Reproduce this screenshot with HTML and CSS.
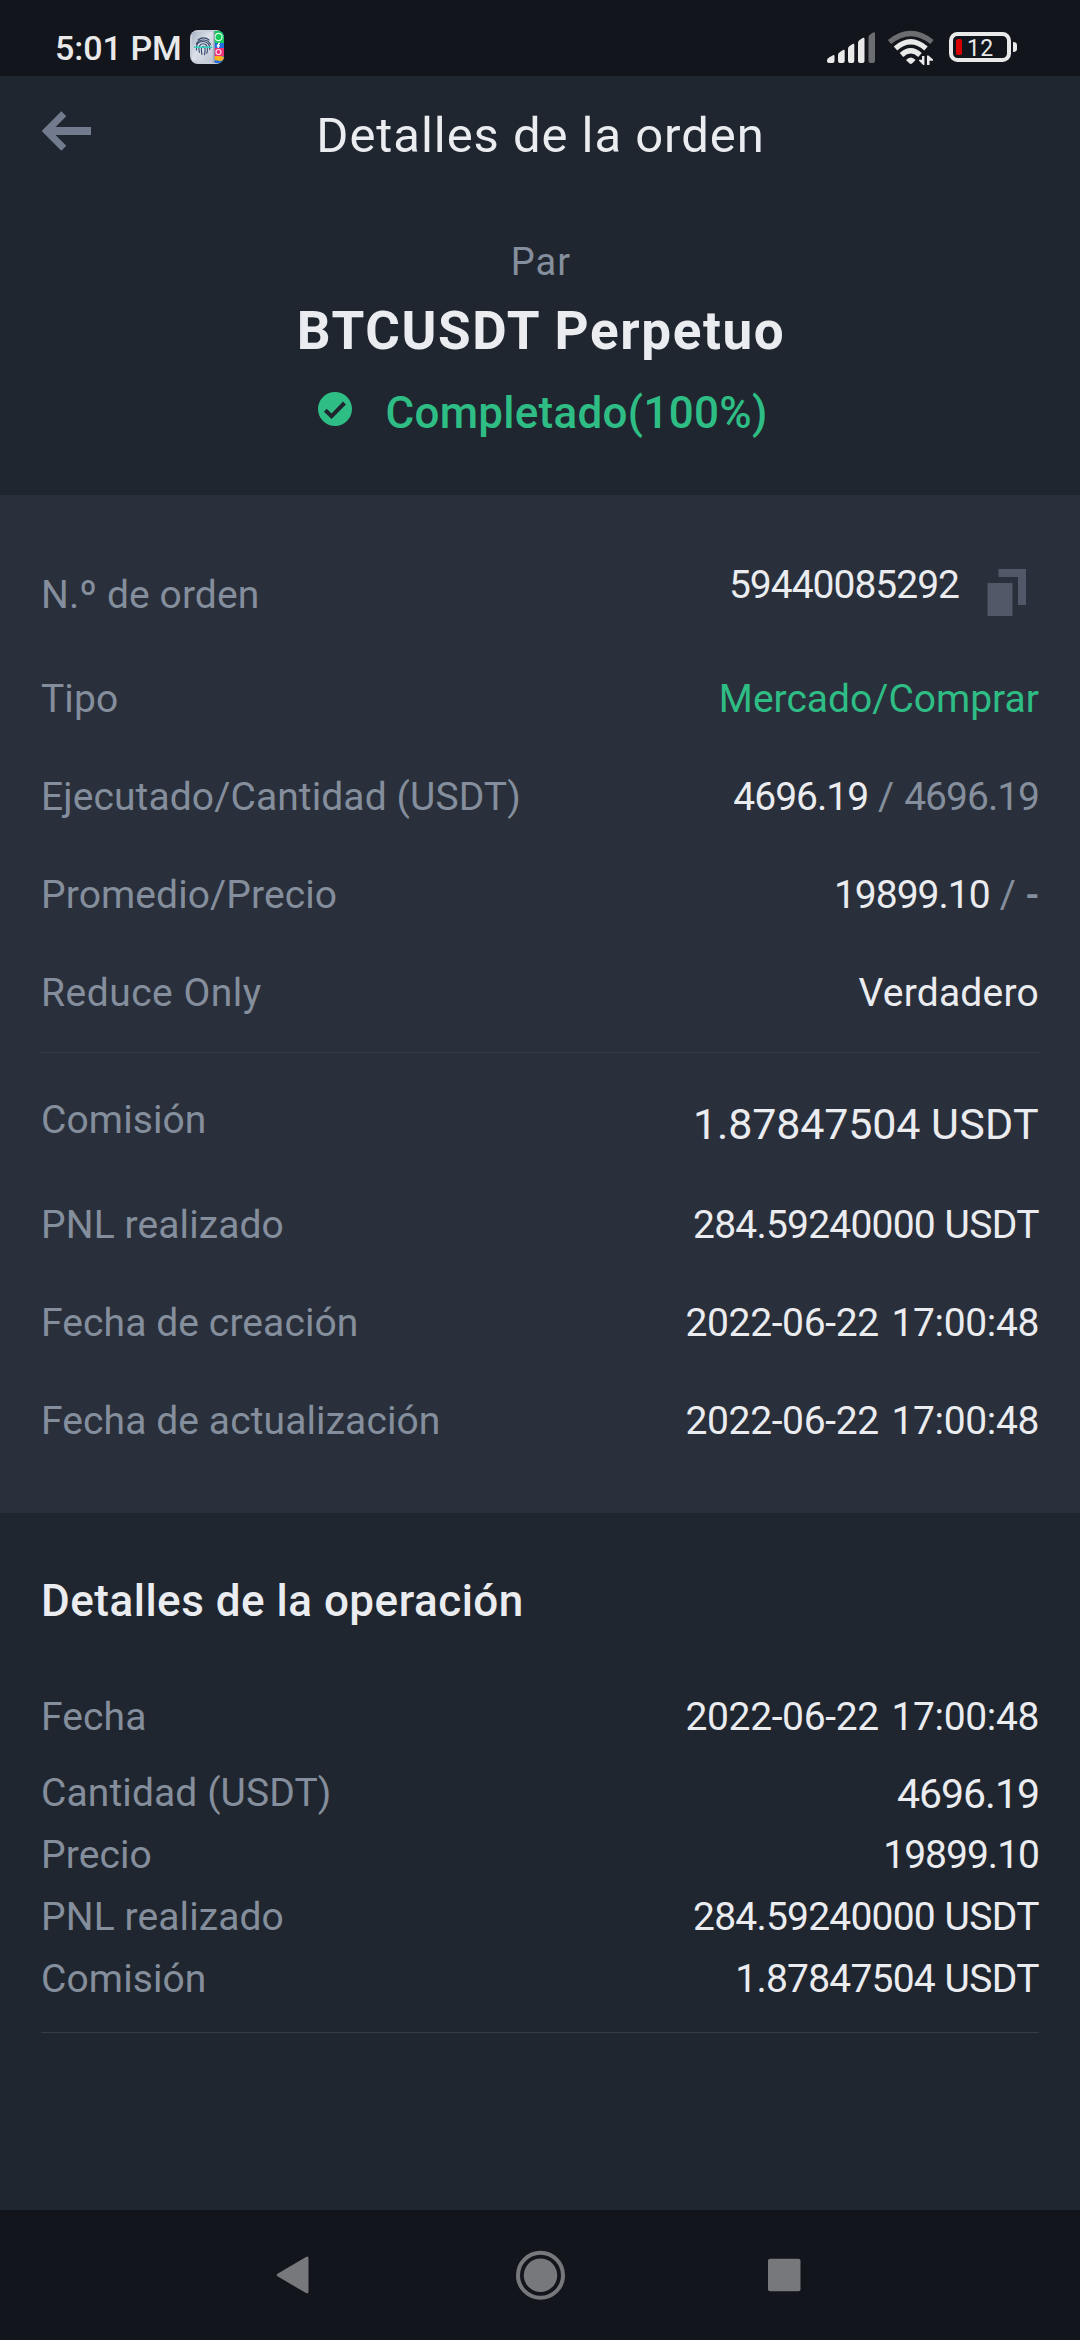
FILE: index.html
```html
<!DOCTYPE html>
<html lang="es">
<head>
<meta charset="utf-8">
<meta name="viewport" content="width=device-width">
<title>Detalles de la orden</title>
<link rel="stylesheet" href="styles.css">
</head>
<body>
<div class="screen">
  <div class="statusbar">
    <div class="status-left">
      <span class="clock">5:01 PM</span>
      <svg class="app-icon" viewBox="0 0 34 34" width="34" height="34">
        <defs>
          <linearGradient id="door" x1="0" y1="0" x2="1" y2="1"><stop offset="0" stop-color="#aab4c6"/><stop offset=".45" stop-color="#dce1e9"/><stop offset="1" stop-color="#b9c0ce"/></linearGradient>
          <clipPath id="round"><rect width="34" height="34" rx="8"/></clipPath>
        </defs>
        <g clip-path="url(#round)">
          <rect width="34" height="34" fill="#c9cfda"/>
          <path d="M2 2h22v31L2 30z" fill="url(#door)"/>
          <rect x="24.500" y="1" width="9.500" height="32" fill="#1f6fe0"/>
          <rect x="24.500" y="1" width="9.500" height="12" fill="#15c95a"/>
          <circle cx="28.500" cy="7" r="3.600" fill="none" stroke="#d8ffe6" stroke-width="1.200"/>
          <path d="M30 13.300c-1.500 0-1.800.6-1.800 1.700v3M26.800 15.700h3" fill="none" stroke="#fff" stroke-width="1.400"/>
          <rect x="24.500" y="18" width="9.500" height="8" fill="#ef2f78"/>
          <circle cx="28.500" cy="22" r="2.500" fill="none" stroke="#ffd5e4" stroke-width="1.200"/>
          <path d="M24.500 26H31l3 1v3l-4 1-5.500-1z" fill="#ffb01c"/>
          <path d="M24 2v31" stroke="#8e97a6" stroke-width="1"/>
          <g fill="none" stroke="#34466a" stroke-width="1.100" stroke-linecap="round">
            <path d="M8 10c3-2.800 8-2.800 11 0M6.300 14c2-5 11.500-6 14.200.5M6.500 20c-.8-6 2-8.500 6.300-8.500s7.500 3 7 8M9.300 22.500c-1-5.500.3-8.700 3.700-8.700s4.900 2.600 4.400 6.500c-.2 2-.6 3-.6 3M12 24.500c-1-4-1-8 1.200-8 2.600 0 2 4.500 1.300 8.300"/>
          </g>
          <path d="M4 17.300h18" stroke="#2fd3bd" stroke-width="1.500"/>
        </g>
      </svg>
    </div>
    <svg class="status-icons" viewBox="824 28 196 40" width="196" height="40">
      <g fill="#e9e9ea">
        <path d="M827 60.500q0-2 2-3l4-2.300q1.500-.7 1.500 1V61q0 2-2 2H829q-2 0-2-2z"/>
        <path d="M838 55q0-2 2-3l3-2q1.700-.8 1.700 1V61q0 2-2 2H840q-2 0-2-2z"/>
        <path d="M848 49q0-2 1.600-3l3-2q1.700-.8 1.700 1V61q0 2-2 2H850q-2 0-2-2z"/>
        <path d="M858 43q0-2 1.600-3l3-2q1.900-.8 1.900 1V61q0 2-2 2H860q-2 0-2-2z"/>
      </g>
      <path d="M868.500 37.500q0-2 1.600-3l3-2q1.900-.8 1.900 1V61q0 2-2 2h-2.500q-2 0-2-2z" fill="#6c6d71"/>
      <g fill="none" stroke-width="5.200">
        <path d="M889.500 42q21.200-17 42.500 0" stroke="#6c6d71"/>
        <path d="M895.500 48.500q15.200-13.500 30.500 0" stroke="#e9e9ea"/>
        <path d="M901.500 55q9.200-8.500 18.500 0" stroke="#e9e9ea"/>
      </g>
      <path d="M906 60q4.800-5 9.600 0l-3.600 3.600q-1.200.8-2.400 0z" fill="#e9e9ea"/>
      <path d="M922 56h2.400v9h-1.200l-4.200-4.200v-1h3zM927 65v-9.500h1.500l4.500 4v1.200h-3.500V65z" fill="#e9e9ea"/>
      <rect x="951" y="34" width="58" height="26" rx="6.500" fill="none" stroke="#e9e9ea" stroke-width="4"/>
      <rect x="956" y="39" width="6" height="16" rx="1.800" fill="#d90000"/>
      <path d="M1013 42q4 0 4 3v4q0 3-4 3z" fill="#e9e9ea"/>
      <text class="battery-level" x="967" y="56">12</text>
    </svg>
  </div>

  <header class="header">
    <svg class="back" viewBox="0 0 50 40" width="50" height="40" fill="none" stroke="#727b8e"><path d="M50 20H5" stroke-width="8"/><path d="M22.800 2.800 5.600 20l17.200 17.200" stroke-width="7"/></svg>
    <h1 class="title">Detalles de la orden</h1>
  </header>

  <section class="summary">
    <div class="pair-label">Par</div>
    <div class="pair">BTCUSDT Perpetuo</div>
    <div class="state">
      <svg class="check" viewBox="0 0 34 34" width="34" height="34"><circle cx="17" cy="17" r="17" fill="#2ebd85"/><path d="m7.300 18.300 6.200 6 13-13.300" fill="none" stroke="#20262f" stroke-width="4"/></svg>
      <span class="state-text">Completado(100%)</span>
    </div>
  </section>

  <section class="details">
    <div class="row row-order">
      <span class="label">N.º de orden</span>
      <div class="copy-value">
        <span class="num">59440085292</span>
        <svg class="copy" viewBox="0 0 40 47" width="40" height="47" fill="#515968"><path d="M11.500 0H39v36h-8V8H11.500z"/><path d="M.500 14H25.500v33H.500z"/></svg>
      </div>
    </div>
    <div class="row"><span class="label">Tipo</span><span class="side">Mercado/Comprar</span></div>
    <div class="row"><span class="label">Ejecutado/Cantidad (USDT)</span><div class="split"><span class="num">4696.19</span><span class="slash">/</span><span class="num muted">4696.19</span></div></div>
    <div class="row"><span class="label">Promedio/Precio</span><div class="split"><span class="num">19899.10</span><span class="slash">/</span><span class="muted dash">-</span></div></div>
    <div class="row"><span class="label reduce">Reduce Only</span><span class="plain">Verdadero</span></div>
    <hr class="rule">
    <div class="row row-fee"><span class="label">Comisión</span><div class="amount amount-large"><span class="num">1.87847504</span> <span class="unit">USDT</span></div></div>
    <div class="row"><span class="label">PNL realizado</span><div class="amount"><span class="num">284.59240000</span> <span class="unit">USDT</span></div></div>
    <div class="row"><span class="label">Fecha de creación</span><span class="date">2022-06-22 17:00:48</span></div>
    <div class="row"><span class="label">Fecha de actualización</span><span class="date">2022-06-22 17:00:48</span></div>
  </section>

  <section class="trades">
    <h2 class="subtitle">Detalles de la operación</h2>
    <div class="row trade-date"><span class="label">Fecha</span><span class="date">2022-06-22 17:00:48</span></div>
    <div class="row"><span class="label">Cantidad (USDT)</span><span class="num quantity">4696.19</span></div>
    <div class="row"><span class="label">Precio</span><span class="num">19899.10</span></div>
    <div class="row"><span class="label">PNL realizado</span><div class="amount"><span class="num">284.59240000</span> <span class="unit">USDT</span></div></div>
    <div class="row"><span class="label">Comisión</span><div class="amount"><span class="num">1.87847504</span> <span class="unit">USDT</span></div></div>
    <hr class="rule">
  </section>

  <nav class="navbar">
    <svg viewBox="262 0 60 60" width="60" height="60" fill="#77787b"><path d="M277.500 28.800 306 11.900q2.500-1 2.500 1.500v33.200q0 2.500-2.500 1.500L277.500 31.200q-1.700-1.200 0-2.400z"/></svg>
    <svg viewBox="509 0 60 60" width="60" height="60"><circle cx="540.500" cy="30.300" r="22.500" fill="none" stroke="#77787b" stroke-width="4"/><circle cx="540.500" cy="30.300" r="16.700" fill="#77787b"/></svg>
    <svg viewBox="756 0 60 60" width="60" height="60" fill="#77787b"><rect x="768" y="13.700" width="32.500" height="32.600" rx="2"/></svg>
  </nav>
</div>
</body>
</html>
```
FILE: styles.css
```css
* {
  box-sizing: border-box;
}

body {
  margin: 0;
  background: #20262f;
  color: #eaecf0;
  font-family: Roboto, "Noto Sans", sans-serif;
}

svg {
  display: block;
  flex: none;
}

.screen {
  display: flex;
  flex-direction: column;
  width: 1080px;
  height: 2340px;
  background: #20262f;
}

/* Status bar */
.statusbar {
  display: flex;
  flex: none;
  justify-content: space-between;
  height: 76px;
  padding: 28px 60px 0 55px;
  background: #12151c;
}

.status-left {
  display: flex;
  gap: 8px;
  height: 40px;
  align-items: center;
}

.clock {
  font-size: 34px;
  font-weight: 500;
  line-height: 40px;
  color: #e9e9ea;
}

.app-icon {
  margin-bottom: 2px;
}

.battery-level {
  font-size: 23px;
  font-weight: 400;
  letter-spacing: 0.3px;
  fill: #e9e9ea;
}

/* Header */
.header {
  display: grid;
  flex: none;
  grid-template-columns: 1fr auto 1fr;
  align-items: center;
  height: 119px;
  padding: 0 40px 0 41px;
}

.back {
  margin-bottom: 9px;
}

.title {
  margin: 0;
  font-size: 49px;
  font-weight: 400;
  line-height: 60px;
  letter-spacing: 0.95px;
}

/* Pair and state */
.summary {
  display: flex;
  flex: none;
  flex-direction: column;
  align-items: center;
  height: 300px;
  padding: 42px 0 0 2px;
}

.pair-label {
  font-size: 38px;
  font-weight: 400;
  line-height: 50px;
  letter-spacing: 1.1px;
  color: #848e9c;
}

.pair {
  margin-top: 10px;
  font-size: 53px;
  font-weight: 700;
  line-height: 68px;
  letter-spacing: 1.62px;
}

.state {
  display: flex;
  align-items: center;
  gap: 33px;
  margin-top: 18px;
  padding-left: 4px;
}

.check {
  margin-bottom: 8px;
}

.state-text {
  font-size: 44px;
  font-weight: 500;
  line-height: 60px;
  letter-spacing: 0.28px;
  color: #2ebd85;
}

/* Rows */
.details {
  flex: none;
  padding: 45px 41px 43px;
  background: #2a303b;
}

.row {
  display: flex;
  align-items: center;
  justify-content: space-between;
  height: 98px;
  font-size: 39px;
  line-height: 50px;
}

.row-order {
  height: 110px;
}

.row-fee {
  height: 112px;
}

.label {
  letter-spacing: 0.1px;
  color: #848e9c;
}

.reduce {
  letter-spacing: 0.5px;
}

.num {
  letter-spacing: -1px;
}

.date {
  letter-spacing: -0.36px;
  word-spacing: 3.4px;
}

.copy-value {
  display: flex;
  align-items: center;
  gap: 28px;
  padding-right: 12px;
}

.copy-value .num {
  margin-bottom: 20px;
}

.copy {
  margin-bottom: 5px;
}

.side {
  color: #2ebd85;
}

.split {
  display: flex;
  gap: 10px;
}

.slash,
.muted {
  color: #848e9c;
}

.dash {
  font-weight: 500;
}

.plain {
  letter-spacing: 0.22px;
}

.amount .num {
  letter-spacing: -0.8px;
}

.unit {
  letter-spacing: -0.6px;
}

.amount-large {
  padding-top: 8px;
  font-size: 43px;
}

.amount-large .num {
  letter-spacing: -0.15px;
}

.amount-large .unit {
  letter-spacing: 0.3px;
}

.rule {
  height: 1px;
  margin: 10px 0 11px;
  border: 0;
  background: #363d48;
}

/* Trades */
.trades {
  flex: 1;
  padding: 58px 41px 0;
}

.subtitle {
  margin: 0 0 55px;
  font-size: 44px;
  font-weight: 500;
  line-height: 60px;
  letter-spacing: 0.5px;
}

.trades .row {
  height: 62px;
}

.trades .trade-date {
  margin-bottom: 14px;
}

.quantity {
  padding-top: 2px;
  font-size: 41px;
}

.trades .rule {
  margin-top: 22px;
}

/* System navigation */
.navbar {
  display: flex;
  flex: none;
  justify-content: space-between;
  align-items: center;
  height: 130px;
  padding: 0 264px 0 262px;
  background: #12151c;
}
```
